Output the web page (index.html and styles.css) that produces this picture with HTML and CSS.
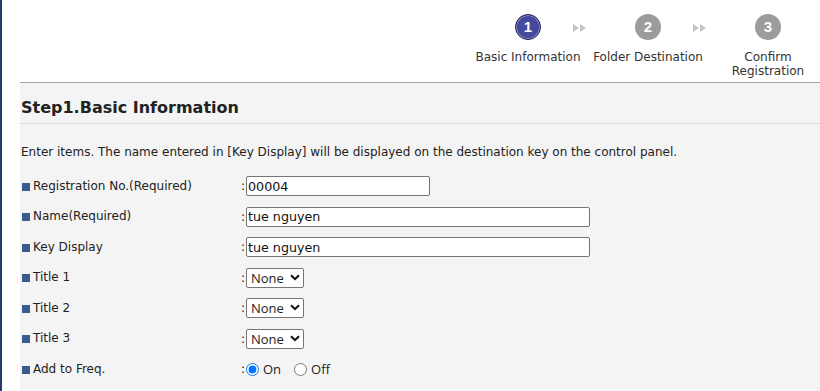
FILE: index.html
```html
<!DOCTYPE html>
<html lang="en">

<head>
    <meta charset="UTF-8">
    <title>Register Destination</title>
    <link rel="stylesheet" href="styles.css">
</head>

<body>
    <header class="topbar">
        <ol class="steps">
            <li class="step current">
                <span class="num">1</span>
                <span class="name">Basic Information</span>
            </li>
            <li class="arrow">
                <svg width="14" height="8" viewBox="0 0 14 8"><polygon points="0,0 6,4 0,8" /><polygon points="7,0 13,4 7,8" /></svg>
            </li>
            <li class="step">
                <span class="num">2</span>
                <span class="name">Folder Destination</span>
            </li>
            <li class="arrow">
                <svg width="14" height="8" viewBox="0 0 14 8"><polygon points="0,0 6,4 0,8" /><polygon points="7,0 13,4 7,8" /></svg>
            </li>
            <li class="step">
                <span class="num">3</span>
                <span class="name">Confirm<br>Registration</span>
            </li>
        </ol>
    </header>

    <main class="content">
        <h1 class="title">Step1.Basic Information</h1>
        <p class="intro">Enter items. The name entered in [Key Display] will be displayed on the destination key on the control panel.</p>

        <form class="fields">
            <div class="row">
                <label class="lbl" for="regno">Registration No.(Required)</label>
                <span class="colon">:</span>
                <input id="regno" class="txt short" type="text" value="00004">
            </div>
            <div class="row">
                <label class="lbl" for="name">Name(Required)</label>
                <span class="colon">:</span>
                <input id="name" class="txt long" type="text" value="tue nguyen">
            </div>
            <div class="row">
                <label class="lbl" for="keydisp">Key Display</label>
                <span class="colon">:</span>
                <input id="keydisp" class="txt long" type="text" value="tue nguyen">
            </div>
            <div class="row">
                <label class="lbl" for="t1">Title 1</label>
                <span class="colon">:</span>
                <span class="sel">
                    <select id="t1"><option>None</option></select>
                    <svg class="chev" width="10" height="7" viewBox="0 0 10 7"><polyline points="1,1.2 5,5 9,1.2" /></svg>
                </span>
            </div>
            <div class="row">
                <label class="lbl" for="t2">Title 2</label>
                <span class="colon">:</span>
                <span class="sel">
                    <select id="t2"><option>None</option></select>
                    <svg class="chev" width="10" height="7" viewBox="0 0 10 7"><polyline points="1,1.2 5,5 9,1.2" /></svg>
                </span>
            </div>
            <div class="row">
                <label class="lbl" for="t3">Title 3</label>
                <span class="colon">:</span>
                <span class="sel">
                    <select id="t3"><option>None</option></select>
                    <svg class="chev" width="10" height="7" viewBox="0 0 10 7"><polyline points="1,1.2 5,5 9,1.2" /></svg>
                </span>
            </div>
            <div class="row">
                <span class="lbl">Add to Freq.</span>
                <span class="colon">:</span>
                <span class="radios">
                    <input id="freq-on" type="radio" name="freq" checked><label for="freq-on">On</label>
                    <input id="freq-off" type="radio" name="freq"><label for="freq-off">Off</label>
                </span>
            </div>
        </form>
    </main>
</body>

</html>
```

FILE: styles.css
```css
* {
    margin: 0;
    padding: 0;
    box-sizing: border-box;
}

html,
body {
    height: 100%;
}

body {
    border-left: 2px solid #2b3866;
    padding-left: 18px;
    background: white;
    font-family: "DejaVu Sans", Verdana, sans-serif;
    font-size: 12px;
    color: #222;
    overflow: hidden;
}

/* ---------- stepper ---------- */
.topbar {
    height: 83px;
    border-bottom: 1px solid #a3a3a3;
    background: white;
}

.steps {
    display: flex;
    justify-content: flex-end;
    padding: 14px 2px 0 0;
    list-style: none;
}

.step {
    width: 100px;
    display: flex;
    flex-direction: column;
    align-items: center;
}

.num {
    width: 26px;
    height: 26px;
    border-radius: 50%;
    background: #9c9c9c;
    color: white;
    font-family: "Liberation Sans", Arial, sans-serif;
    font-weight: bold;
    font-size: 15px;
    line-height: 26px;
    text-align: center;
    margin-bottom: 10px;
}

.current .num {
    background: #45499b;
    border: 1px solid #23265f;
    box-shadow: inset 0 0 0 1px #8a8dc6;
    line-height: 24px;
}

.name {
    line-height: 14px;
    text-align: center;
    white-space: nowrap;
    color: #333;
}

.arrow {
    width: 20px;
    height: 26px;
    display: flex;
    align-items: center;
}

.arrow svg {
    margin-left: -5px;
    margin-top: 2px;
    fill: #c2c2c2;
}

/* ---------- content ---------- */
.content {
    background: #f4f4f4;
    height: calc(100% - 83px);
}

.title {
    font-size: 16px;
    line-height: 20px;
    padding: 15px 0 5px 1px;
    border-bottom: 1px solid #dcdcdc;
    color: #222;
}

.intro {
    line-height: 15px;
    padding: 21px 0 0 1px;
    margin-bottom: 11px;
}

.row {
    display: flex;
    align-items: center;
    height: 30.5px;
}

.lbl {
    width: 221px;
    display: flex;
    align-items: center;
    padding-left: 2px;
    line-height: 15px;
}

.lbl::before {
    content: "";
    width: 8px;
    height: 8px;
    margin: 1px 3px 0 0;
    background: #3b5a8e;
}

.colon {
    width: 4px;
}

.txt {
    height: 20px;
    margin-left: 1px;
    padding: 0 1px;
    border: 1px solid #767676;
    border-radius: 2px;
    background: white;
    font-family: "DejaVu Sans", Verdana, sans-serif;
    font-size: 12.7px;
    color: #111;
}

.short {
    width: 184px;
}

.long {
    width: 344px;
}

.sel {
    position: relative;
    margin-left: 1px;
    display: flex;
}

.sel select {
    appearance: none;
    width: 58px;
    height: 20px;
    padding: 0 0 0 4px;
    border: 1px solid #767676;
    border-radius: 2px;
    background: white;
    font-family: "Open Sans", "Noto Sans", sans-serif;
    font-size: 13px;
    color: #222;
}

.chev {
    position: absolute;
    top: 6px;
    left: 44px;
    pointer-events: none;
    fill: none;
    stroke: #111;
    stroke-width: 2;
}

.radios {
    display: flex;
    align-items: center;
    font-family: "Open Sans", "Noto Sans", sans-serif;
    font-size: 13px;
    color: #222;
}

.radios input {
    width: 13px;
    height: 13px;
    margin: 0 4px 0 1px;
}

.radios input + label + input {
    margin-left: 13px;
}
```
